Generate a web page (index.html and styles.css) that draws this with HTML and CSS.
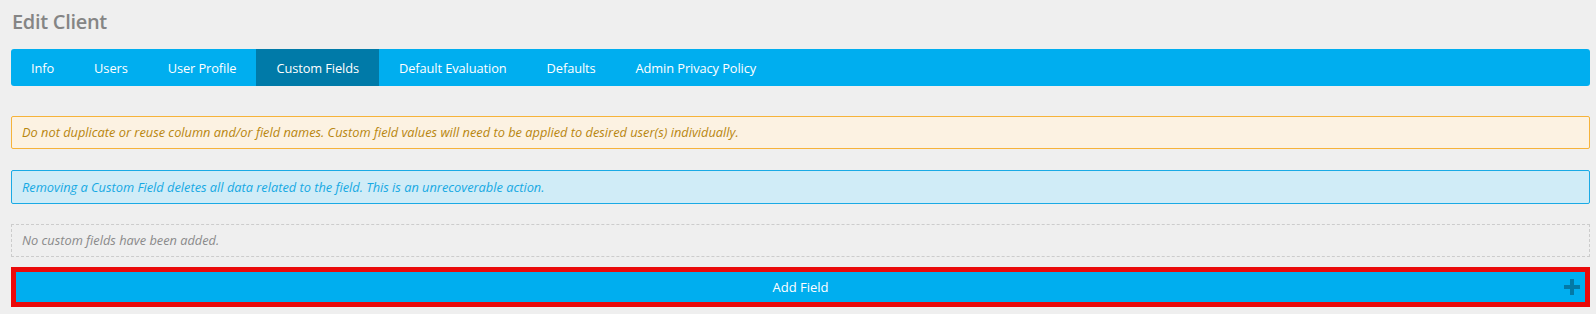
FILE: index.html
```html
<!DOCTYPE html>
<html>
<head>
<meta charset="utf-8">
<link rel="stylesheet" href="styles.css">
</head>
<body>
<div class="page">
  <h1 class="title">Edit Client</h1>
  <nav class="tabs">
    <a class="tab">Info</a>
    <a class="tab">Users</a>
    <a class="tab">User Profile</a>
    <a class="tab active">Custom Fields</a>
    <a class="tab">Default Evaluation</a>
    <a class="tab">Defaults</a>
    <a class="tab">Admin Privacy Policy</a>
  </nav>
  <div class="alert warning">Do not duplicate or reuse column and/or field names. Custom field values will need to be applied to desired user(s) individually.</div>
  <div class="alert info">Removing a Custom Field deletes all data related to the field. This is an unrecoverable action.</div>
  <div class="empty">No custom fields have been added.</div>
  <button class="add-btn">
    <span class="add-label">Add Field</span>
    <svg class="plus" width="16" height="16" viewBox="0 0 16 16"><rect x="6" y="0" width="4" height="16" fill="#0379a6"/><rect x="0" y="6" width="16" height="4" fill="#0379a6"/></svg>
  </button>
</div>
</body>
</html>
```
FILE: styles.css
```css
html, body {
  margin: 0;
  padding: 0;
  background: #efefef;
}
body {
  font-family: "Open Sans", "Noto Sans", sans-serif;
}
.page {
  padding: 0 6px 0 11px;
  display: flex;
  flex-direction: column;
}
.title {
  margin: 9px 0 0 1px;
  font-size: 20px;
  line-height: 26px;
  font-weight: 600;
  color: #858585;
  letter-spacing: -0.3px;
}
.tabs {
  margin-top: 14px;
  height: 37px;
  background: #00aeef;
  border-radius: 3px;
  display: flex;
  overflow: hidden;
}
.tab {
  padding: 0 20px;
  display: flex;
  align-items: center;
  color: #fff;
  font-size: 12.8px;
  letter-spacing: -0.08px;
}
.tab.active {
  background: #007aa8;
}
.alert {
  border: 1px solid;
  border-radius: 2px;
  padding: 6px 10px;
  font-size: 12.8px;
  line-height: 19px;
  font-style: italic;
}
.warning {
  margin-top: 30px;
  background: #fcf2e2;
  border-color: #f6b33a;
  color: #b8860f;
}
.info {
  margin-top: 21px;
  line-height: 20px;
  background: #d0ecf7;
  border-color: #1aaae5;
  color: #16a9e3;
}
.empty {
  margin-top: 20px;
  border: 1px dashed #cccccc;
  padding: 6px 10px;
  font-size: 12.8px;
  line-height: 19px;
  font-style: italic;
  color: #8a8a8a;
}
.add-btn {
  margin-top: 10px;
  height: 40px;
  border: 5px solid #ea0a0a;
  background: #00aeef;
  color: #fff;
  font-family: inherit;
  font-size: 13px;
  display: flex;
  align-items: center;
  justify-content: center;
  position: relative;
  padding: 0;
}
.plus {
  position: absolute;
  right: 5px;
  top: 7px;
}
```
